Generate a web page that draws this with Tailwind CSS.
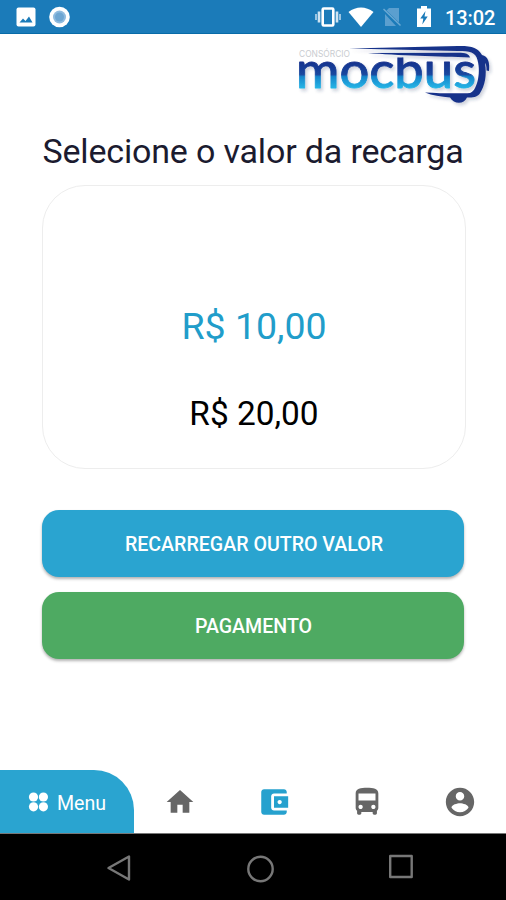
<!DOCTYPE html>
<html lang="pt-BR">
<head>
    <meta charset="UTF-8">
    <meta name="viewport" content="width=device-width, initial-scale=1.0">
    <title>Recarga</title>
    <script src="https://cdn.jsdelivr.net/npm/@tailwindcss/browser@4"></script>
</head>
<body class="bg-white font-[Roboto,sans-serif]">
<div class="flex flex-col w-[506px] h-[900px] overflow-hidden">

    <!-- Status bar -->
    <header class="flex items-center h-[34px] shrink-0 bg-[#1b7bb9] border-b border-[#086ba8] pl-4 pr-[11px] text-white">
        <svg class="w-[20px] h-[20px]" viewBox="0 0 20 20">
            <rect x="0.5" y="0.5" width="19" height="19" rx="2" fill="#fff"/>
            <path d="M3.5 15.5l3.5-4 2.5 2.5 3.5-4.500 3.500 6z" fill="#1b7bb9"/>
        </svg>
        <svg class="w-[22px] h-[22px] ml-[12px]" viewBox="0 0 22 22">
            <circle cx="11.500" cy="11" r="10.300" fill="#fff"/>
            <circle cx="11.500" cy="11" r="6.500" fill="#8fbbdf"/>
            <circle cx="11.500" cy="11" r="4.500" fill="#6ea6d2"/>
        </svg>
        <div class="flex items-center ml-auto">
            <svg class="w-[26px] h-[20px]" viewBox="0 0 26 20">
                <path d="M1 7v6M25 7v6" stroke="#a9cde6" stroke-width="1.800"/>
                <path d="M4 4.500v11M22 4.500v11" stroke="#cfe4f2" stroke-width="2.600"/>
                <rect x="7.700" y="1.500" width="10.600" height="17" rx="1" fill="none" stroke="#fff" stroke-width="2.600"/>
            </svg>
            <svg class="w-[26px] h-[20px] ml-[7px]" viewBox="0 0 26 20">
                <path d="M0.500 5C8 -1 18 -1 25.500 5L13 20z" fill="#fff"/>
            </svg>
            <svg class="w-[20px] h-[20px] ml-[8px]" viewBox="0 0 20 20">
                <path d="M7 1h10v14.500L4.500 3.500zM3 7l11 12H3z" fill="#5b9fcf"/>
                <path d="M1.500 2l17 16.500" stroke="#6aa9d4" stroke-width="1.500"/>
            </svg>
            <svg class="w-[14px] h-[21px] ml-[15px]" viewBox="0 0 14 21">
                <path d="M4 0h6v2.500h4V21H0V2.500h4z" fill="#fff"/>
                <path d="M8.500 5L3.300 12.500h3L5.300 18.500l5.400-8h-3.200z" fill="#1b7bb9"/>
            </svg>
            <span class="w-[50px] ml-[14px] pt-[2px] text-[20px] font-medium leading-none tracking-[-0.1px] whitespace-nowrap">13:02</span>
        </div>
    </header>

    <main class="flex flex-col h-[736px] shrink-0">

        <!-- Logo -->
        <svg class="w-[220px] h-[76px] ml-auto mt-[2px]" viewBox="0 0 220 76">
            <defs>
                <linearGradient id="word" gradientUnits="userSpaceOnUse" x1="0" y1="25" x2="0" y2="53">
                    <stop offset="0" stop-color="#16318c"/>
                    <stop offset="0.480" stop-color="#1a479f"/>
                    <stop offset="0.560" stop-color="#1785cb"/>
                    <stop offset="1" stop-color="#26b9e8"/>
                </linearGradient>
                <filter id="soft" x="-10%" y="-20%" width="120%" height="150%">
                    <feDropShadow dx="2" dy="2.500" stdDeviation="1.500" flood-color="#1d3860" flood-opacity="0.220"/>
                </filter>
                <clipPath id="short"><rect x="0" y="21.500" width="220" height="40"/></clipPath>
            </defs>
            <text x="13" y="20.500" font-family="Inter, sans-serif" font-size="8.500" textLength="51" lengthAdjust="spacingAndGlyphs" fill="#c9ccd0">CONSÓRCIO</text>
            <g filter="url(#soft)" fill="#17338a">
                <!-- roof and front of the bus -->
                <path d="M63 12.500L172 10C186 9.700 192 12 196 19C202 20.500 204 26 203 35L200.500 34.500C200.500 30 200 28 199 27C201 39 199 50 193.500 58C191 61 187 61.500 181 61.500C178 68.500 168 68.500 164 61.500C155 60.500 146 59.500 139 56.500C155 57.500 177 57.500 184 57C190 56 195.500 38 191.500 24C189.500 16 184 15 172 15Z"/>
                <path d="M82 17L172 16.800C180 16.800 183 18 184 21.500C155 20.500 110 19.500 82 17z"/>
                <g clip-path="url(#short)">
                    <text x="10" y="52" font-family="Lato, sans-serif" font-size="50" font-weight="500" textLength="180" lengthAdjust="spacingAndGlyphs" fill="url(#word)" stroke="url(#word)" stroke-width="0.800" stroke-linejoin="round">mocbus</text>
                </g>
            </g>
        </svg>

        <h1 class="mt-[17px] h-[44px] text-center text-[34px] leading-[44px] tracking-[-0.17px] text-[#1b1b2f] whitespace-nowrap">Selecione o valor da recarga</h1>

        <!-- Value picker -->
        <section class="flex flex-col items-center mt-[12px] ml-[42px] w-[424px] h-[284px] rounded-[43px] border border-[#ededed]">
            <p class="mt-[117px] h-[46px] text-[37.5px] leading-[46px] text-[#219dca]">R$ 10,00</p>
            <p class="mt-[44px] h-[42px] text-[33.4px] leading-[42px] text-black">R$ 20,00</p>
        </section>

        <!-- Actions -->
        <div class="flex flex-col gap-[15px] mt-[41px] ml-[42px] w-[422px] text-[19.6px] font-medium text-white">
            <button class="h-[67px] pt-[3px] pl-[2px] rounded-[17px] bg-[#2aa4d0] shadow-[0_2px_3px_rgba(0,0,0,0.3)]">RECARREGAR OUTRO VALOR</button>
            <button class="h-[67px] pt-[3px] pl-px rounded-[17px] bg-[#4eaa62] shadow-[0_2px_3px_rgba(0,0,0,0.3)]">PAGAMENTO</button>
        </div>
    </main>

    <!-- Tab bar -->
    <nav class="flex items-center h-[63px] shrink-0 text-[#666666]">
        <div class="flex items-center w-[134px] h-[63px] pl-[28px] rounded-tr-[40px] bg-[#2aa4d0] text-white">
            <svg class="w-[20px] h-[20px]" viewBox="0 0 20 20" fill="#fff">
                <circle cx="5.500" cy="5" r="4.600"/>
                <circle cx="15.400" cy="5" r="4.600"/>
                <circle cx="5.500" cy="14.800" r="4.600"/>
                <circle cx="15.400" cy="14.800" r="4.600"/>
            </svg>
            <span class="ml-[9px] pt-[4px] text-[19.600px] leading-none">Menu</span>
        </div>
        <svg class="w-[32px] h-[32px] ml-[30px]" viewBox="0 0 24 24" fill="currentColor"><path d="M10 20v-6h4v6h5v-8h3L12 3 2 12h3v8z"/></svg>
        <svg class="w-[34px] h-[34px] ml-[61px] text-[#26a1ce]" viewBox="0 0 24 24" fill="currentColor"><path d="M21 18v1c0 1.100-.9 2-2 2H5c-1.110 0-2-.9-2-2V5c0-1.100.89-2 2-2h14c1.100 0 2 .9 2 2v1h-9c-1.110 0-2 .9-2 2v8c0 1.100.89 2 2 2h9zm-9-2h10V8H12v8zm4-2.500c-.83 0-1.500-.67-1.500-1.500s.67-1.500 1.500-1.500 1.500.67 1.500 1.500-.67 1.500-1.500 1.500z"/></svg>
        <svg class="w-[34px] h-[34px] ml-[59px]" viewBox="0 0 24 24" fill="currentColor"><path d="M4 16c0 .88.390 1.670 1 2.220V20c0 .55.450 1 1 1h1c.55 0 1-.45 1-1v-1h8v1c0 .55.450 1 1 1h1c.55 0 1-.45 1-1v-1.780c.61-.55 1-1.340 1-2.220V6c0-3.500-3.580-4-8-4s-8 .5-8 4v10zm3.500 1c-.83 0-1.500-.67-1.500-1.500S6.670 14 7.500 14s1.500.67 1.500 1.500S8.330 17 7.500 17zm9 0c-.83 0-1.500-.67-1.500-1.500s.67-1.500 1.500-1.500 1.500.67 1.500 1.500-.67 1.500-1.500 1.500zm1.500-6H6V6h12v5z"/></svg>
        <svg class="w-[34px] h-[34px] ml-[59px]" viewBox="0 0 24 24" fill="currentColor"><path d="M12 2C6.480 2 2 6.480 2 12s4.480 10 10 10 10-4.480 10-10S17.520 2 12 2zm0 3c1.660 0 3 1.340 3 3s-1.340 3-3 3-3-1.340-3-3 1.340-3 3-3zm0 14.200c-2.500 0-4.710-1.280-6-3.220.03-1.990 4-3.080 6-3.080 1.990 0 5.970 1.090 6 3.080-1.290 1.940-3.500 3.220-6 3.220z"/></svg>
    </nav>

    <!-- Android buttons -->
    <footer class="flex h-[67px] shrink-0 bg-black border-t border-[#777777] pt-[20px] pl-[106px]">
        <svg class="w-[26px] h-[28px]" viewBox="0 0 26 28" fill="none" stroke="#777" stroke-width="2.400" stroke-linejoin="round"><path d="M23 2.500v23L2.500 14z"/></svg>
        <svg class="w-[28px] h-[28px] ml-[114px] mt-[1px]" viewBox="0 0 28 28" fill="none" stroke="#777" stroke-width="2.400"><circle cx="14.500" cy="14" r="12.200"/></svg>
        <svg class="w-[26px] h-[26px] ml-[114px]" viewBox="0 0 26 26" fill="none" stroke="#777" stroke-width="2.400" stroke-linejoin="round"><rect x="2.200" y="2" width="21.500" height="21"/></svg>
    </footer>
</div>
</body>
</html>
